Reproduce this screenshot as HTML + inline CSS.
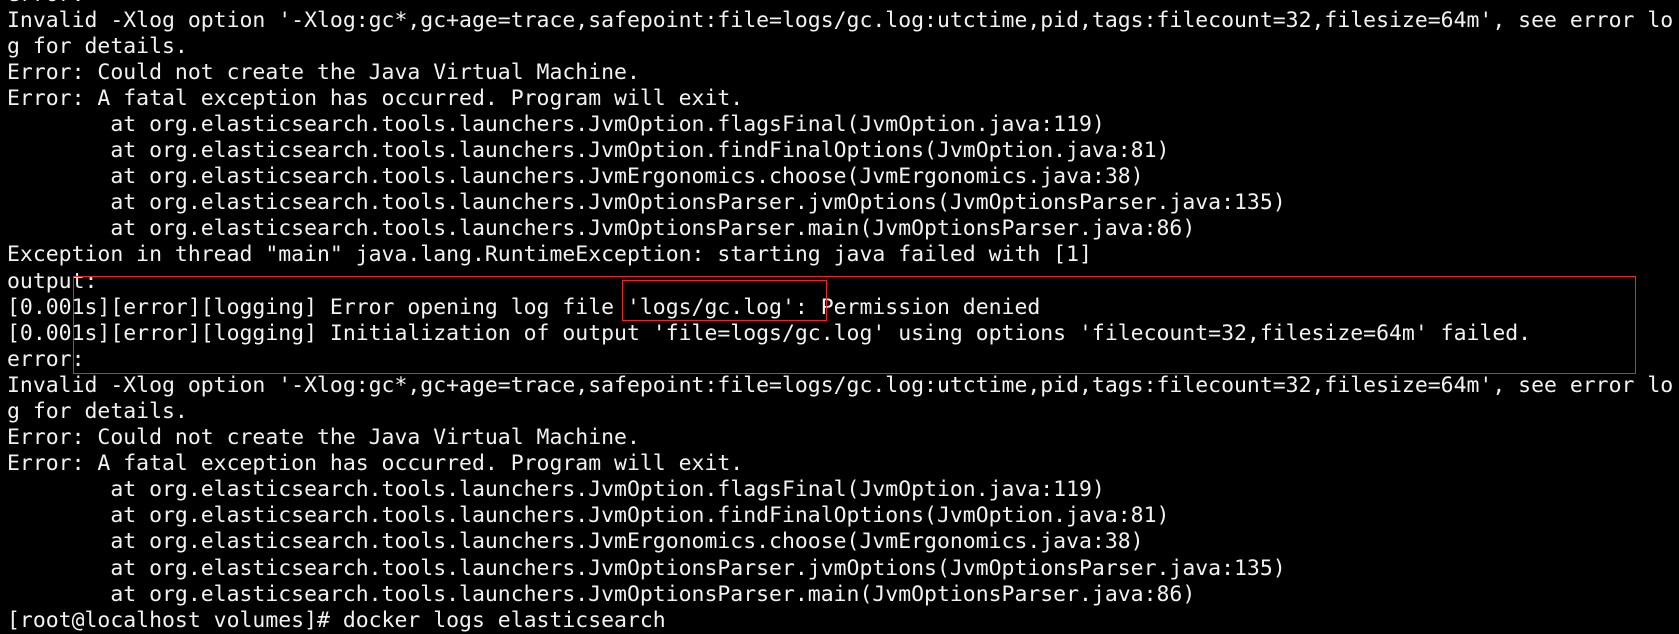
<!DOCTYPE html>
<html><head><meta charset="utf-8"><style>
html,body{margin:0;padding:0;background:#000;width:1679px;height:634px;overflow:hidden;position:relative}
pre{position:absolute;left:7px;top:-18.5px;margin:0;font-family:"DejaVu Sans Mono","Liberation Mono",monospace;font-size:21.46px;line-height:26.1px;color:#f2f2f2;white-space:pre}
.b{position:absolute;border:1.5px solid #e8262b;box-sizing:border-box}
</style></head><body>
<pre>error:
Invalid -Xlog option '-Xlog:gc*,gc+age=trace,safepoint:file=logs/gc.log:utctime,pid,tags:filecount=32,filesize=64m', see error lo
g for details.
Error: Could not create the Java Virtual Machine.
Error: A fatal exception has occurred. Program will exit.
        at org.elasticsearch.tools.launchers.JvmOption.flagsFinal(JvmOption.java:119)
        at org.elasticsearch.tools.launchers.JvmOption.findFinalOptions(JvmOption.java:81)
        at org.elasticsearch.tools.launchers.JvmErgonomics.choose(JvmErgonomics.java:38)
        at org.elasticsearch.tools.launchers.JvmOptionsParser.jvmOptions(JvmOptionsParser.java:135)
        at org.elasticsearch.tools.launchers.JvmOptionsParser.main(JvmOptionsParser.java:86)
Exception in thread "main" java.lang.RuntimeException: starting java failed with [1]
output:
[0.001s][error][logging] Error opening log file 'logs/gc.log': Permission denied
[0.001s][error][logging] Initialization of output 'file=logs/gc.log' using options 'filecount=32,filesize=64m' failed.
error:
Invalid -Xlog option '-Xlog:gc*,gc+age=trace,safepoint:file=logs/gc.log:utctime,pid,tags:filecount=32,filesize=64m', see error lo
g for details.
Error: Could not create the Java Virtual Machine.
Error: A fatal exception has occurred. Program will exit.
        at org.elasticsearch.tools.launchers.JvmOption.flagsFinal(JvmOption.java:119)
        at org.elasticsearch.tools.launchers.JvmOption.findFinalOptions(JvmOption.java:81)
        at org.elasticsearch.tools.launchers.JvmErgonomics.choose(JvmErgonomics.java:38)
        at org.elasticsearch.tools.launchers.JvmOptionsParser.jvmOptions(JvmOptionsParser.java:135)
        at org.elasticsearch.tools.launchers.JvmOptionsParser.main(JvmOptionsParser.java:86)
[root@localhost volumes]# docker logs elasticsearch</pre>
<div class="b" style="left:73px;top:276px;width:1563px;height:98px"></div>
<div class="b" style="left:622px;top:280px;width:205px;height:41px"></div>
</body></html>
